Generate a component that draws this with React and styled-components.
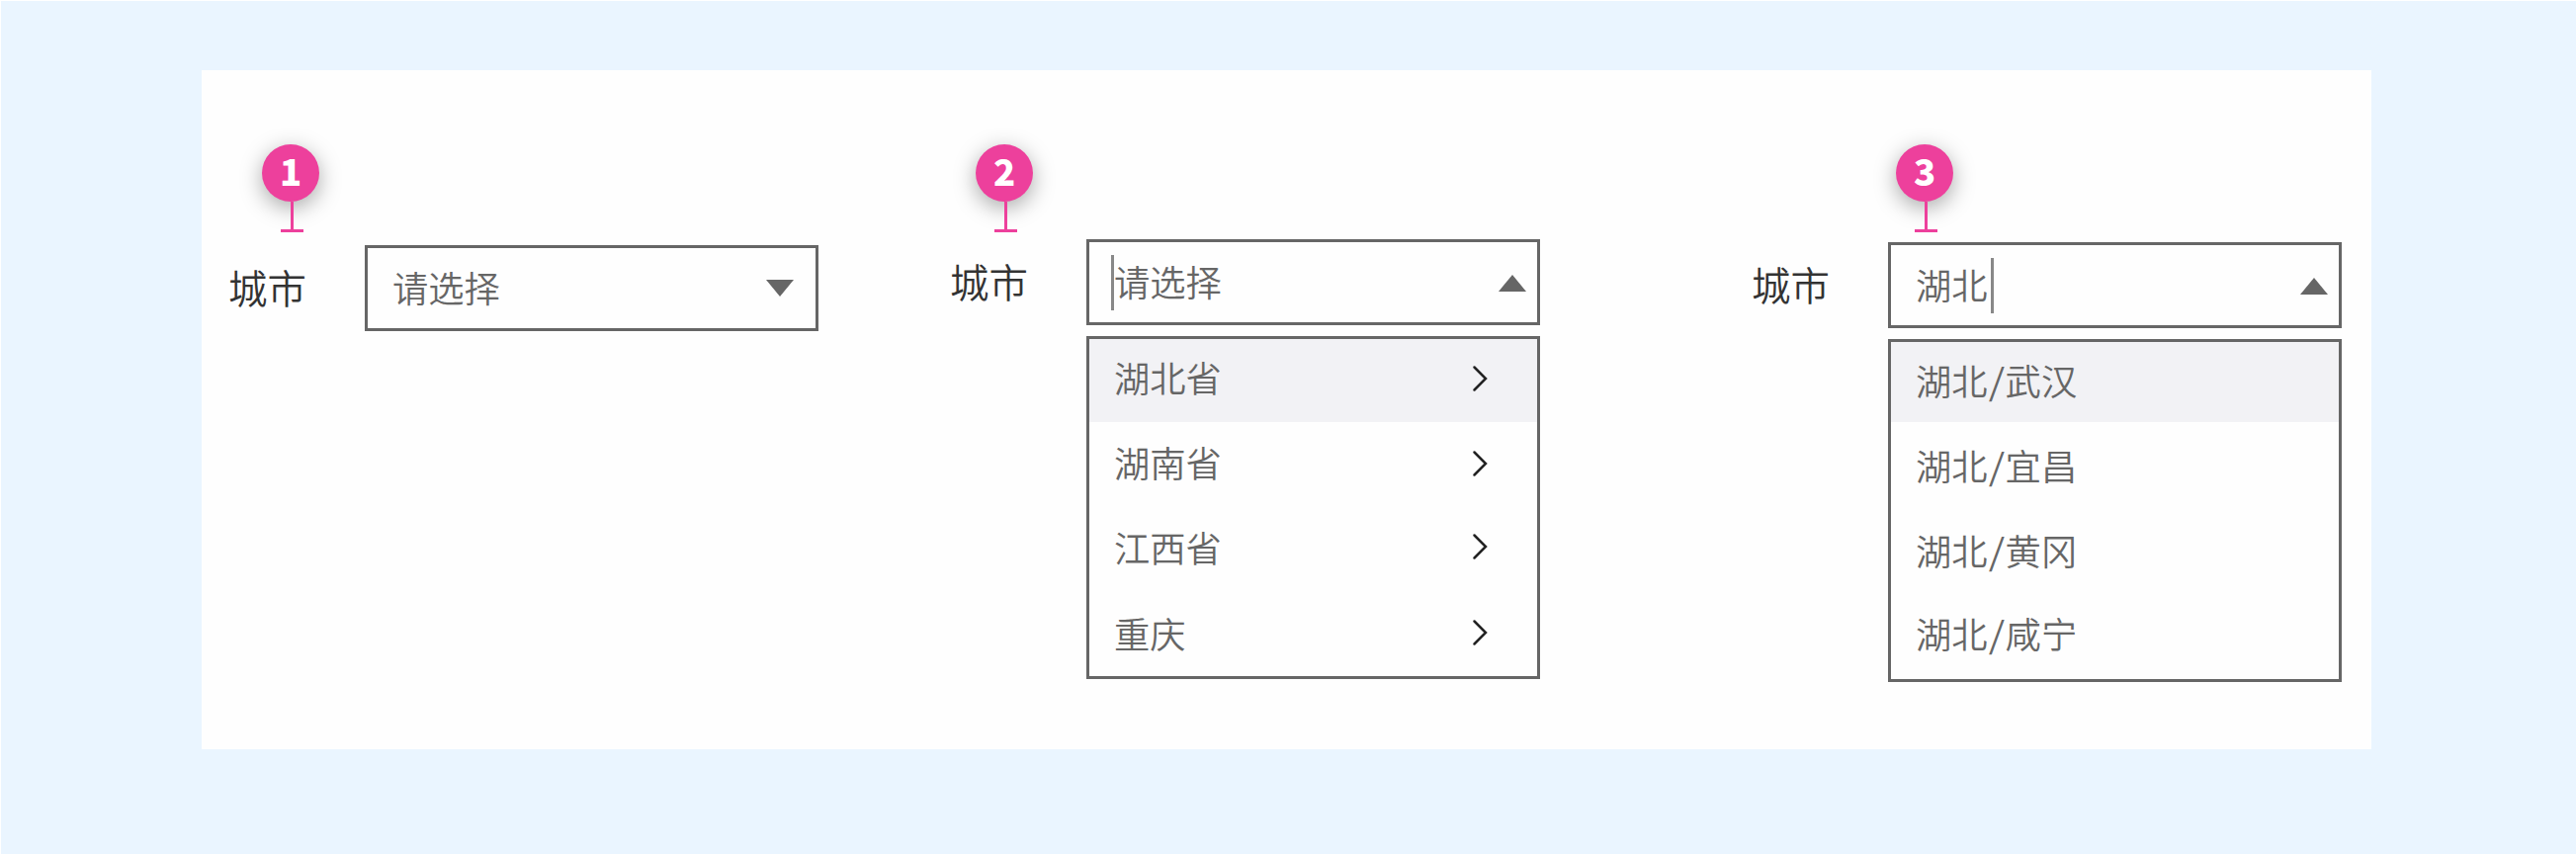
import styled, { createGlobalStyle, css, } from "styled-components";

const colors = {
	page: "#eaf5ff",
	panel: "#fefefe",
	line: "#666",
	text: "#666",
	label: "#333",
	accent: "#ed409c",
	active: "#f2f2f5",
};

const GlobalStyle = createGlobalStyle`
	* {
		box-sizing: border-box;
	}

	body {
		margin: 0;
		background: #fff;
		font-family: "Noto Sans CJK SC", "Noto Sans", sans-serif;
	}
`;

// --------------------------------------------------

const Page = styled.main`
	height: 864px;
	padding: 70px 0 0 203px;
	border: solid #fff;
	border-width: 1px 0 0 1px;
	background: ${ colors.page };
`;

const Panel = styled.section`
	display: grid;
	grid-template-columns: 730px 811px 596px;
	align-items: start;
	width: 2195px;
	height: 687px;
	padding: 75px 0 0 28px;
	background: ${ colors.panel };
`;

// --------------------------------------------------

const MarkerWrapper = styled.div`
	display: flex;
	flex-direction: column;
	align-items: center;
	width: 58px;
	margin-left: ${ p => p.$left }px;
`;

const MarkerDot = styled.div`
	width: 58px;
	height: 58px;
	border-radius: 50%;
	background: ${ colors.accent };
	box-shadow: 0 6px 22px rgba(0, 0, 0, 0.34);
	color: #fff;
	font-size: 36.5px;
	font-weight: 900;
	line-height: 54px;
	text-align: center;
`;

const MarkerStem = styled.div`
	width: 3px;
	height: 28px;
	margin-left: 3px;
	background: ${ colors.accent };
	z-index: 1;
`;

const MarkerFoot = styled.div`
	width: 23px;
	height: 3px;
	margin-left: 3px;
	background: ${ colors.accent };
`;

const Marker = ({ left, children, }) =>
	<MarkerWrapper $left = { left }>
		<MarkerDot>{ children }</MarkerDot>
		<MarkerStem/>
		<MarkerFoot/>
	</MarkerWrapper>;

// --------------------------------------------------

const Field = styled.div`
	display: grid;
	grid-template-columns: 137px 459px;
	row-gap: 11px;
	margin-top: ${ p => p.$top }px;
`;

const Label = styled.label`
	margin-left: -1px;
	color: ${ colors.label };
	font-size: 39.4px;
	font-weight: 350;
	line-height: 84px;
`;

const boxed = css`
	border: 3px solid ${ colors.line };
	color: ${ colors.text };
	font-size: 36.3px;
	font-weight: 350;
`;

const Control = styled.div`
	${ boxed }
	display: flex;
	align-items: center;
	height: 87px;
	padding: 0 ${ p => p.$right }px 0 25px;
`;

const Value = styled.span`
	flex: 1;
	display: flex;
	align-items: center;
	height: 81px;
	padding-bottom: 4px;
`;

const Caret = styled.i`
	width: 3px;
	height: 56px;
	margin: ${ p => p.$end ? "5px 0 0 3px" : "5px 0 0 -3px" };
	background: #888;
`;

const Triangle = styled.svg`
	width: 28px;
	height: 17px;
	fill: ${ colors.line };
	${ p => p.$up ? "margin-top: 2px; transform: rotate(180deg);" : "" }
`;

const Arrow = ({ up, }) =>
	<Triangle $up = { up } viewBox = "0 0 28 17">
		<path d = "M0 0H28L14 17Z"/>
	</Triangle>;

// --------------------------------------------------

const Menu = styled.ul`
	${ boxed }
	grid-column: 2;
	height: 347px;
	margin: 0;
	padding: 0;
	list-style: none;
	overflow: hidden;
`;

const Option = styled.li`
	display: flex;
	justify-content: space-between;
	height: ${ p => p.$height }px;
	padding: ${ p => p.$top }px 50px 0 25px;
	line-height: 54px;
	${ p => p.$active ? `background: ${ colors.active };` : "" }
`;

const Slash = styled.span`
	display: inline-block;
	width: 18px;
	text-align: center;
	transform: scaleX(1.15);
`;

const ChevronSvg = styled.svg`
	width: 17px;
	height: 28px;
	margin-top: ${ p => p.$top }px;
	fill: none;
	stroke: #222;
	stroke-width: 2.5;
	stroke-linecap: round;
`;

const Chevron = ({ top, }) =>
	<ChevronSvg $top = { top } viewBox = "0 0 17 28">
		<path d = "M3.5 2.5L15 14L3.5 25.5"/>
	</ChevronSvg>;

// --------------------------------------------------

const provinces = [
	{ name: "湖北省", height: 84, top: 11, chevron: 15, active: true, },
	{ name: "湖南省", height: 86, top: 13, chevron: 15, },
	{ name: "江西省", height: 87, top: 13, chevron: 13, },
	{ name: "重庆", height: 84, top: 13, chevron: 13, },
];

const cities = [
	{ parent: "湖北", name: "武汉", height: 81, top: 11, active: true, },
	{ parent: "湖北", name: "宜昌", height: 86, top: 16, },
	{ parent: "湖北", name: "黄冈", height: 87, top: 16, },
	{ parent: "湖北", name: "咸宁", height: 87, top: 13, },
];

const Options = ({ items, }) =>
	<Menu>
		{ items.map(item =>
			<Option
				key = { item.name }
				$height = { item.height }
				$top = { item.top }
				$active = { item.active }
			>
				<span>
					{ item.parent ? <>{ item.parent }<Slash>/</Slash></> : null }
					{ item.name }
				</span>
				{ item.chevron ? <Chevron top = { item.chevron }/> : null }
			</Option>,
		) }
	</Menu>;

const App = () =>
	<>
		<GlobalStyle/>
		<Page>
			<Panel>
				<div>
					<Marker left = { 33 }>1</Marker>
					<Field $top = { 13 }>
						<Label>城市</Label>
						<Control $right = { 22 }>
							<Value>请选择</Value>
							<Arrow/>
						</Control>
					</Field>
				</div>

				<div>
					<Marker left = { 25 }>2</Marker>
					<Field $top = { 7 }>
						<Label>城市</Label>
						<Control $right = { 11 }>
							<Value><Caret/>请选择</Value>
							<Arrow up/>
						</Control>
						<Options items = { provinces }/>
					</Field>
				</div>

				<div>
					<Marker left = { 145 }>3</Marker>
					<Field $top = { 10 }>
						<Label>城市</Label>
						<Control $right = { 11 }>
							<Value>湖北<Caret $end/></Value>
							<Arrow up/>
						</Control>
						<Options items = { cities }/>
					</Field>
				</div>
			</Panel>
		</Page>
	</>;

export default App;
